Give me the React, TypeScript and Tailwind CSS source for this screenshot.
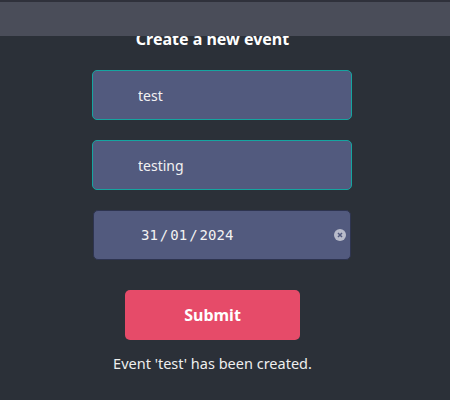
import React from "react";

export default function App() {
  return (
    <div className="relative min-h-[400px] w-[450px] bg-[#2b3038]" style={{ fontFamily: "'Noto Sans', 'Open Sans', sans-serif" }}>
      <div className="absolute left-0 top-0 z-10 h-[36px] w-full border-t-2 border-[#2f313b] bg-[#4a4d59]" />
      <main className="flex w-[425px] flex-col items-center pt-[27px]">
        <h1 className="h-[24px] text-[16px] font-bold leading-[24px] text-white">Create a new event</h1>
        <div className="ml-[19px] mt-[19px] flex w-[260px] flex-col gap-[20px]">
          <input
            readOnly
            value="test"
            className="h-[50px] w-full rounded-[5px] border border-[#15a5a0] bg-[#525a7e] pl-[45px] text-[14px] text-[#f2f2f2] outline-none"
          />
          <input
            readOnly
            value="testing"
            className="h-[50px] w-full rounded-[5px] border border-[#15a5a0] bg-[#525a7e] pl-[45px] text-[14px] text-[#f2f2f2] outline-none"
          />
          <div className="flex h-[50px] w-[258px] items-center self-center rounded-[5px] border border-[#2e3450] bg-[#525a7e] pl-[47px] pr-[4px] text-[14px] text-[#f2f2f2]" style={{ fontFamily: "'DejaVu Sans Mono', monospace" }}>
            <span>31</span>
            <span className="mx-[2px]">/</span>
            <span>01</span>
            <span className="mx-[2px]">/</span>
            <span>2024</span>
            <span className="ml-auto flex h-[12px] w-[12px] items-center justify-center rounded-full bg-[#b9bccb]">
              <svg width="6" height="6" viewBox="0 0 6 6">
                <path d="M1 1 L5 5 M5 1 L1 5" stroke="#525a7e" strokeWidth="1.5" />
              </svg>
            </span>
          </div>
        </div>
        <button className="mt-[30px] h-[50px] w-[175px] rounded-[5px] bg-[#e64b69] text-[16px] font-bold text-white">Submit</button>
        <p className="mt-[13px] text-[14.5px] leading-[20px] text-[#eeeeee]">Event 'test' has been created.</p>
      </main>
    </div>
  );
}
